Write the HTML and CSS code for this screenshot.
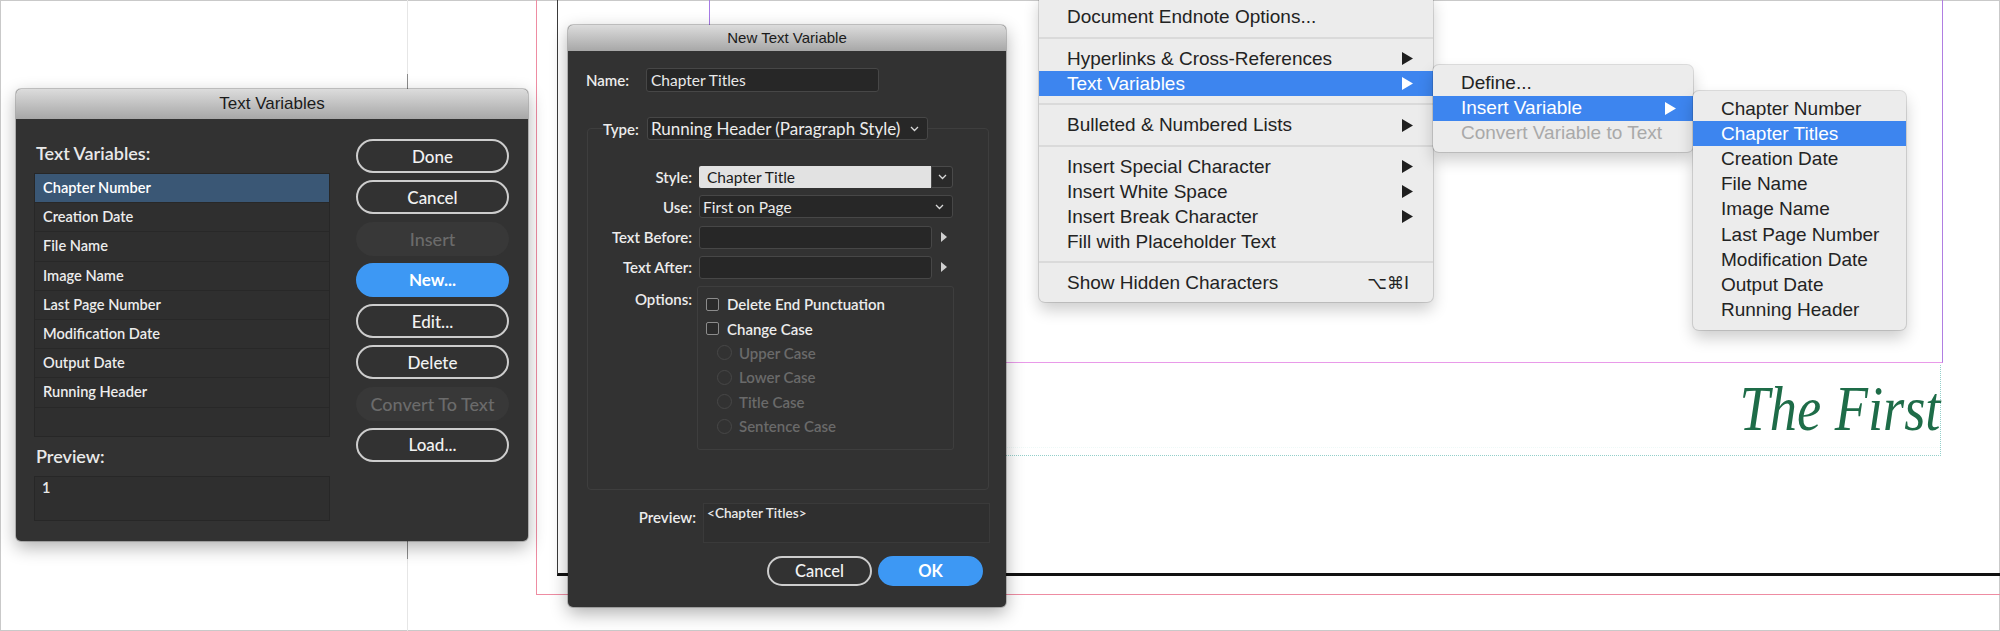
FILE: index.html
```html
<!DOCTYPE html>
<html lang="en">
<head>
<meta charset="utf-8">
<title>Text Variables</title>
<link rel="stylesheet" href="styles.css">
</head>
<body>
<div class="canvas">
  <div class="edge-guide"><div class="edge-shade"></div></div>
  <div class="bleed"></div>
  <div class="page"></div>
  <div class="margins"></div>
  <div class="text-frame"><span class="running-head">The First</span></div>

  <section class="dialog dlg-vars">
    <header class="titlebar tb-large">Text Variables</header>
    <div class="vars-body">
      <div class="vars-left">
        <div class="vars-label">Text Variables:</div>
        <ul class="var-list">
          <li class="selected">Chapter Number</li>
          <li>Creation Date</li>
          <li>File Name</li>
          <li>Image Name</li>
          <li>Last Page Number</li>
          <li>Modification Date</li>
          <li>Output Date</li>
          <li>Running Header</li>
        </ul>
        <div class="vars-label preview-label">Preview:</div>
        <div class="vars-preview">1</div>
      </div>
      <div class="vars-buttons">
        <div class="btn">Done</div>
        <div class="btn">Cancel</div>
        <div class="btn disabled">Insert</div>
        <div class="btn primary">New...</div>
        <div class="btn">Edit...</div>
        <div class="btn">Delete</div>
        <div class="btn disabled">Convert To Text</div>
        <div class="btn">Load...</div>
      </div>
    </div>
  </section>

  <section class="dialog dlg-new">
    <header class="titlebar tb-small">New Text Variable</header>
    <div class="new-body">
      <div class="name-row">
        <span class="fld-label name-label">Name:</span>
        <div class="field name-field">Chapter Titles</div>
      </div>
      <fieldset class="type-group">
        <legend class="type-legend">
          <span class="fld-label type-label">Type:</span>
          <span class="field select type-select"><span class="sel-text type-text">Running Header (Paragraph Style)</span><svg class="chev" width="9" height="6" viewBox="0 0 9 6"><path d="M1 1l3.5 3.5L8 1" fill="none" stroke="#d8d8d8" stroke-width="1.3"/></svg></span>
        </legend>
        <div class="opt-row">
          <span class="row-label">Style:</span>
          <div class="combo">
            <span class="combo-value">Chapter Title</span>
            <span class="combo-btn"><svg class="chev" width="9" height="6" viewBox="0 0 9 6"><path d="M1 1l3.5 3.5L8 1" fill="none" stroke="#d8d8d8" stroke-width="1.3"/></svg></span>
          </div>
        </div>
        <div class="opt-row">
          <span class="row-label">Use:</span>
          <div class="field select use-select"><span class="sel-text">First on Page</span><svg class="chev" width="9" height="6" viewBox="0 0 9 6"><path d="M1 1l3.5 3.5L8 1" fill="none" stroke="#d8d8d8" stroke-width="1.3"/></svg></div>
        </div>
        <div class="opt-row">
          <span class="row-label">Text Before:</span>
          <div class="field text-input"></div>
          <svg class="flyout" width="6" height="10" viewBox="0 0 6 10"><path d="M0 0L6 5L0 10Z" fill="#d0d0d0"/></svg>
        </div>
        <div class="opt-row">
          <span class="row-label">Text After:</span>
          <div class="field text-input"></div>
          <svg class="flyout" width="6" height="10" viewBox="0 0 6 10"><path d="M0 0L6 5L0 10Z" fill="#d0d0d0"/></svg>
        </div>
        <div class="opt-row options-row">
          <span class="row-label">Options:</span>
          <div class="options-box">
            <div class="check"><span class="checkbox"></span>Delete End Punctuation</div>
            <div class="check"><span class="checkbox"></span>Change Case</div>
            <div class="radio"><span class="radio-dot"></span>Upper Case</div>
            <div class="radio"><span class="radio-dot"></span>Lower Case</div>
            <div class="radio"><span class="radio-dot"></span>Title Case</div>
            <div class="radio"><span class="radio-dot"></span>Sentence Case</div>
          </div>
        </div>
      </fieldset>
      <div class="preview-row">
        <span class="row-label preview-lbl">Preview:</span>
        <div class="preview-box">&lt;Chapter Titles&gt;</div>
      </div>
      <div class="btn-row">
        <div class="btn small">Cancel</div>
        <div class="btn small primary">OK</div>
      </div>
    </div>
  </section>

  <div class="menu menu-main">
    <div class="menu-item"><span class="label">Document Endnote Options...</span></div>
    <div class="menu-sep"></div>
    <div class="menu-item"><span class="label">Hyperlinks &amp; Cross-References</span><svg class="tri" width="11" height="13" viewBox="0 0 11 13"><path d="M0 0L11 6.5L0 13Z"/></svg></div>
    <div class="menu-item active"><span class="label">Text Variables</span><svg class="tri" width="11" height="13" viewBox="0 0 11 13"><path d="M0 0L11 6.5L0 13Z"/></svg></div>
    <div class="menu-sep"></div>
    <div class="menu-item"><span class="label">Bulleted &amp; Numbered Lists</span><svg class="tri" width="11" height="13" viewBox="0 0 11 13"><path d="M0 0L11 6.5L0 13Z"/></svg></div>
    <div class="menu-sep"></div>
    <div class="menu-item"><span class="label">Insert Special Character</span><svg class="tri" width="11" height="13" viewBox="0 0 11 13"><path d="M0 0L11 6.5L0 13Z"/></svg></div>
    <div class="menu-item"><span class="label">Insert White Space</span><svg class="tri" width="11" height="13" viewBox="0 0 11 13"><path d="M0 0L11 6.5L0 13Z"/></svg></div>
    <div class="menu-item"><span class="label">Insert Break Character</span><svg class="tri" width="11" height="13" viewBox="0 0 11 13"><path d="M0 0L11 6.5L0 13Z"/></svg></div>
    <div class="menu-item"><span class="label">Fill with Placeholder Text</span></div>
    <div class="menu-sep"></div>
    <div class="menu-item"><span class="label">Show Hidden Characters</span><span class="shortcut">⌥⌘I</span></div>
  </div>

  <div class="menu menu-sub1">
    <div class="menu-item"><span class="label">Define...</span></div>
    <div class="menu-item active"><span class="label">Insert Variable</span><svg class="tri" width="11" height="13" viewBox="0 0 11 13"><path d="M0 0L11 6.5L0 13Z"/></svg></div>
    <div class="menu-item disabled"><span class="label">Convert Variable to Text</span></div>
  </div>

  <div class="menu menu-sub2">
    <div class="menu-item"><span class="label">Chapter Number</span></div>
    <div class="menu-item active"><span class="label">Chapter Titles</span></div>
    <div class="menu-item"><span class="label">Creation Date</span></div>
    <div class="menu-item"><span class="label">File Name</span></div>
    <div class="menu-item"><span class="label">Image Name</span></div>
    <div class="menu-item"><span class="label">Last Page Number</span></div>
    <div class="menu-item"><span class="label">Modification Date</span></div>
    <div class="menu-item"><span class="label">Output Date</span></div>
    <div class="menu-item"><span class="label">Running Header</span></div>
  </div>
</div>
</body>
</html>
```

FILE: styles.css
```css
* { box-sizing: border-box; }

html, body {
  margin: 0;
  padding: 0;
  background: #ffffff;
}

body {
  width: 2000px;
  height: 631px;
  overflow: hidden;
}

.canvas {
  position: relative;
  width: 2000px;
  height: 631px;
  overflow: hidden;
  background: #ffffff;
}

.canvas::before {
  content: "";
  position: absolute;
  inset: 0;
  border: 1px solid #c9c9c9;
}

/* ---------- document guides ---------- */
.edge-guide {
  position: absolute;
  left: 407px;
  top: 0;
  width: 1px;
  height: 631px;
  background: #e6e6e6;
}
.edge-shade {
  position: absolute;
  left: 0;
  top: 74px;
  width: 1px;
  height: 485px;
  background: #8c8c8c;
}

.bleed {
  position: absolute;
  left: 536px;
  top: -10px;
  width: 1480px;
  height: 605px;
  border-left: 1px solid #ee8ca2;
  border-bottom: 1px solid #ee8ca2;
}

.page {
  position: absolute;
  left: 557px;
  top: -10px;
  width: 1460px;
  height: 586px;
  border-left: 1px solid #3a3a3a;
  border-bottom: 3px solid #111111;
}

.margins {
  position: absolute;
  left: 709px;
  top: -10px;
  width: 1234px;
  height: 373px;
  border-left: 1px solid #a77be6;
  border-right: 1px solid #b07ee2;
  border-bottom: 1px solid #e99ae9;
}

.text-frame {
  position: absolute;
  left: 709px;
  top: 365px;
  width: 1232px;
  height: 91px;
  border-right: 1px dotted #93cfca;
  border-bottom: 1px dotted #93cfca;
  display: flex;
  justify-content: flex-end;
  padding-top: 12px;
}
.text-frame::after {
  content: "";
  position: absolute;
  left: 0;
  right: 0;
  top: 82px;
  border-top: 1px dotted #eef8f7;
}

.running-head {
  display: inline-block;
  font-family: "Liberation Serif", serif;
  font-style: italic;
  font-size: 64px;
  line-height: 64px;
  height: 64px;
  color: #1e6c48;
  transform: scaleX(0.85);
  transform-origin: right center;
}

/* ---------- dialogs ---------- */
.dialog {
  position: absolute;
  background: #323232;
  border-radius: 5px;
  overflow: hidden;
  box-shadow: 0 6px 18px rgba(0, 0, 0, 0.32), 0 0 0 1px rgba(0, 0, 0, 0.2);
  font-family: "Lato", "Open Sans", sans-serif;
  color: #e9e9e9;
}

.titlebar {
  background: linear-gradient(#dcdcdc, #a7a7a7);
  color: #1b1b1b;
  text-align: center;
  font-family: "Liberation Sans", sans-serif;
}
.tb-large {
  height: 30px;
  line-height: 30px;
  font-size: 17px;
}
.tb-small {
  height: 26px;
  line-height: 26px;
  font-size: 15px;
}

/* Text Variables dialog */
.dlg-vars {
  left: 16px;
  top: 89px;
  width: 512px;
  height: 452px;
}

.vars-body {
  display: grid;
  grid-template-columns: 296px 153px;
  column-gap: 26px;
  padding: 20px 0 0 18px;
}

.vars-left {
  display: flex;
  flex-direction: column;
}

.vars-label {
  font-size: 18px;
  line-height: 20px;
  font-weight: 600;
  margin-top: 4px;
  padding-left: 2px;
}
.preview-label {
  margin-top: 9px;
}

.var-list {
  list-style: none;
  margin: 10px 0 0;
  padding: 0;
  height: 264px;
  border: 1px solid #272727;
  background: #2f2f2f;
}
.var-list li {
  height: 29.2px;
  line-height: 28.2px;
  border-bottom: 1px solid #282828;
  padding-left: 8px;
  font-size: 14.6px;
  font-weight: 600;
  color: #ececec;
}
.var-list li.selected {
  background: #3a5775;
  color: #ffffff;
}

.vars-preview {
  margin-top: 10px;
  height: 45px;
  border: 1px solid #272727;
  background: #2f2f2f;
  padding: 2px 7px;
  font-size: 14.5px;
  font-weight: 600;
}

.vars-buttons {
  display: flex;
  flex-direction: column;
  gap: 7.29px;
}

.btn {
  height: 34px;
  border: 2px solid #cdcdcd;
  border-radius: 17px;
  display: flex;
  align-items: center;
  justify-content: center;
  font-size: 17px;
  font-weight: 500;
  color: #f2f2f2;
  white-space: nowrap;
}
.btn.disabled {
  border-color: transparent;
  background: #383838;
  color: #6b6b6b;
  font-size: 18px;
}
.btn.primary {
  border-color: #3d98f4;
  background: #3d98f4;
  color: #ffffff;
  font-weight: 700;
}

/* New Text Variable dialog */
.dlg-new {
  left: 568px;
  top: 25px;
  width: 438px;
  height: 582px;
}

.new-body {
  padding: 17px 0 0 18px;
  font-size: 15px;
}

.fld-label,
.row-label {
  font-weight: 600;
  font-size: 15px;
  color: #ececec;
}

.name-row {
  display: flex;
  align-items: center;
  height: 24px;
}
.name-label {
  width: 60px;
}

.field {
  background: #272727;
  border: 1px solid #474747;
  border-radius: 3px;
}
.name-field {
  width: 233px;
  height: 24px;
  line-height: 22px;
  padding-left: 4px;
  font-size: 15.5px;
}

.type-group {
  margin: 25px 0 0 1px;
  width: 402px;
  padding: 25px 0 39px;
  border: 1px solid #3e3e3e;
  border-radius: 4px;
  min-inline-size: 0;
}
.type-legend {
  margin-left: 15px;
  padding: 0;
  display: flex;
  align-items: center;
  height: 23px;
  background: #323232;
}
.type-label {
  width: 44px;
}

.select {
  display: flex;
  align-items: center;
  justify-content: space-between;
  padding: 0 8px 0 3px;
}
.sel-text {
  font-size: 15.5px;
  color: #ececec;
}
.type-text {
  font-size: 17px;
}
.type-select {
  width: 281px;
  height: 23px;
}

.opt-row {
  display: flex;
  align-items: center;
  height: 23px;
  margin-bottom: 7.25px;
}
.row-label {
  width: 104px;
  text-align: right;
  margin-right: 7px;
  flex: none;
}

.combo {
  display: flex;
  width: 254px;
  height: 22px;
}
.combo-value {
  width: 232px;
  background: #e2e2e2;
  color: #1a1a1a;
  font-size: 15.5px;
  line-height: 22px;
  padding-left: 8px;
  border-radius: 2px 0 0 2px;
}
.combo-btn {
  flex: 1;
  display: flex;
  align-items: center;
  justify-content: center;
  background: #2a2a2a;
  border: 1px solid #4a4a4a;
  border-radius: 0 3px 3px 0;
}

.use-select {
  width: 254px;
  height: 23px;
}

.text-input {
  width: 233px;
  height: 23px;
}
.flyout {
  margin-left: 9px;
}

.options-row {
  align-items: flex-start;
  height: 164px;
  margin-bottom: 0;
}
.options-row .row-label {
  padding-top: 4px;
  line-height: 18px;
  margin-right: 5px;
}

.options-box {
  width: 257px;
  height: 164px;
  border: 1px solid #3e3e3e;
  border-radius: 3px;
  padding-top: 5px;
}

.check,
.radio {
  height: 24.4px;
  display: flex;
  align-items: center;
  font-size: 15px;
  font-weight: 600;
}
.check {
  padding-left: 8px;
  color: #ececec;
}
.checkbox {
  width: 13px;
  height: 13px;
  border: 1px solid #8c8c8c;
  border-radius: 2px;
  background: #2b2b2b;
  margin-right: 8px;
}
.radio {
  padding-left: 19px;
  color: #6a6a6a;
}
.radio-dot {
  width: 15px;
  height: 15px;
  border: 1.5px solid #474747;
  border-radius: 50%;
  margin-right: 7px;
}

.preview-row {
  display: flex;
  align-items: flex-start;
  margin-top: 13px;
}
.preview-lbl {
  width: 110px;
  margin-right: 7px;
  padding-top: 5px;
  line-height: 18px;
}
.preview-box {
  width: 287px;
  height: 40px;
  border: 1px solid #3a3a3a;
  background: #2f2f2f;
  font-size: 13.6px;
  font-weight: 600;
  padding: 1px 3px;
}

.btn-row {
  display: flex;
  justify-content: flex-end;
  gap: 6px;
  margin-top: 13px;
  padding-right: 23px;
}
.btn.small {
  width: 105px;
  height: 30px;
  border-radius: 15px;
  font-size: 16.5px;
}

/* ---------- menus ---------- */
.menu {
  position: absolute;
  background: #ececec;
  border-radius: 6px;
  box-shadow: 0 8px 16px rgba(0, 0, 0, 0.2), 0 0 0 1px rgba(0, 0, 0, 0.12);
  font-family: "Liberation Sans", "DejaVu Sans", sans-serif;
  font-size: 19px;
  color: #232323;
}

.menu-item {
  height: 25px;
  display: flex;
  align-items: center;
  padding: 0 20px 0 28px;
  white-space: nowrap;
}
.menu-item .label {
  flex: 1;
}
.menu-item .tri {
  fill: #1f1f1f;
}
.menu-item.active {
  background: #3d85ef;
  color: #ffffff;
}
.menu-item.active .tri {
  fill: #ffffff;
}
.menu-item.disabled {
  color: #a9a9a9;
}
.shortcut {
  margin-right: 4px;
  font-family: "DejaVu Sans", "Liberation Sans", sans-serif;
  font-size: 17px;
}

.menu-sep {
  height: 16.5px;
  display: flex;
  align-items: center;
}
.menu-sep::before {
  content: "";
  flex: 1;
  height: 2px;
  background: #dadada;
}

.menu-main {
  left: 1039px;
  top: -6px;
  width: 394px;
  padding: 10.5px 0 6px;
}

.menu-sub1 {
  left: 1433px;
  top: 65px;
  width: 260px;
  padding: 5.5px 0 6.5px;
}
.menu-sub1 .menu-item {
  padding-right: 17px;
}

.menu-sub2 {
  left: 1693px;
  top: 91px;
  width: 213px;
  padding: 5px 0 7px;
}
.menu-sub2 .menu-item {
  height: 25.2px;
}
```
